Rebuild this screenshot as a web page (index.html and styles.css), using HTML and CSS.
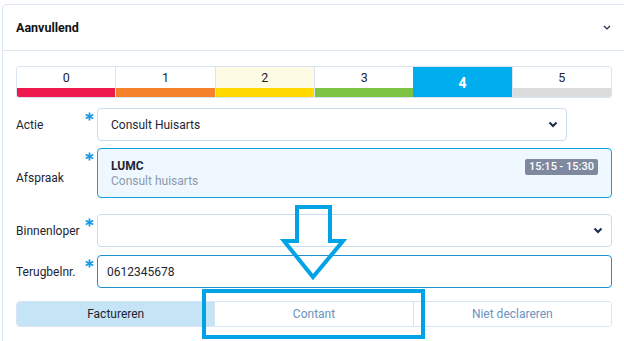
FILE: index.html
```html
<!DOCTYPE html>
<html lang="nl">
<head>
  <meta charset="UTF-8" />
  <meta name="viewport" content="width=device-width,initial-scale=1" />
  <title>Aanvullend</title>
  <link rel="stylesheet" href="styles.css">
</head>
<body>
  <div class="card">
    <div class="card-header">
      <span class="card-title">Aanvullend</span>
      <svg class="collapse" viewBox="0 0 8 5"><path d="M1 1 L4 4 L7 1" fill="none" stroke="#1a2a4a" stroke-width="1.2"/></svg>
    </div>

    <div class="card-body">
      <!-- urgency steps -->
      <div class="steps">
        <div class="step"><span class="num">0</span><span class="bar red"></span></div>
        <div class="step"><span class="num">1</span><span class="bar orange"></span></div>
        <div class="step soft"><span class="num">2</span><span class="bar yellow"></span></div>
        <div class="step"><span class="num">3</span><span class="bar green"></span></div>
        <div class="step active"><span class="num">4</span></div>
        <div class="step"><span class="num">5</span><span class="bar grey"></span></div>
      </div>

      <div class="row">
        <label class="label">Actie</label>
        <span class="req"><svg viewBox="0 0 10 10"><path d="M5 0.5V9.5M0.8 2.7L9.2 7.3M0.8 7.3L9.2 2.7" stroke="#1e9be0" stroke-width="2"/></svg></span>
        <div class="field select short">
          <span>Consult Huisarts</span>
          <svg class="chev" viewBox="0 0 10 7"><path d="M1.5 1.5 L5 5 L8.5 1.5" fill="none" stroke="#1a2a4a" stroke-width="2"/></svg>
        </div>
      </div>

      <div class="row row-appt">
        <label class="label low">Afspraak</label>
        <span class="req"><svg viewBox="0 0 10 10"><path d="M5 0.5V9.5M0.8 2.7L9.2 7.3M0.8 7.3L9.2 2.7" stroke="#1e9be0" stroke-width="2"/></svg></span>
        <div class="appt">
          <div class="appt-text">
            <div class="appt-place">LUMC</div>
            <div class="appt-type">Consult huisarts</div>
          </div>
          <span class="badge">15:15 - 15:30</span>
        </div>
      </div>

      <div class="row row-runner">
        <label class="label">Binnenloper</label>
        <span class="req"><svg viewBox="0 0 10 10"><path d="M5 0.5V9.5M0.8 2.7L9.2 7.3M0.8 7.3L9.2 2.7" stroke="#1e9be0" stroke-width="2"/></svg></span>
        <div class="field select">
          <span></span>
          <svg class="chev" viewBox="0 0 10 7"><path d="M1.5 1.5 L5 5 L8.5 1.5" fill="none" stroke="#1a2a4a" stroke-width="2"/></svg>
        </div>
      </div>

      <div class="row row-phone">
        <label class="label">Terugbelnr.</label>
        <span class="req"><svg viewBox="0 0 10 10"><path d="M5 0.5V9.5M0.8 2.7L9.2 7.3M0.8 7.3L9.2 2.7" stroke="#1e9be0" stroke-width="2"/></svg></span>
        <div class="field focus"><span>0612345678</span></div>
      </div>

      <div class="btn-group">
        <button class="seg selected">Factureren</button>
        <button class="seg">Contant</button>
        <button class="seg">Niet declareren</button>
      </div>
    </div>
  </div>

  <!-- annotation drawn over the form -->
  <svg class="annot" viewBox="0 0 624 341">
    <polygon points="297,207 330,207 330,241 343,241 313,277 284,241 297,241" fill="none" stroke="#00a4e6" stroke-width="4" stroke-linejoin="miter"/>
    <rect x="204" y="291" width="219" height="46" fill="none" stroke="#00a4e6" stroke-width="4"/>
  </svg>
</body>
</html>
```

FILE: styles.css
```css
* {
  margin: 0;
  padding: 0;
  box-sizing: border-box;
}

body {
  width: 624px;
  height: 341px;
  overflow: hidden;
  position: relative;
  background: #fff;
  font-family: Roboto, 'Liberation Sans', sans-serif;
  font-size: 12px;
  color: #1d2533;
}

.card {
  margin: 4px 0 0 2px;
  width: 622px;
  height: 337px;
  overflow: hidden;
  border: 1px solid #dce7f3;
  border-right: none;
  border-bottom: none;
  border-radius: 5px 0 0 0;
}

.card-header {
  height: 46px;
  display: flex;
  align-items: center;
  justify-content: space-between;
  padding: 0 0 0 13px;
  border-bottom: 1px solid #dce7f3;
}

.card-title {
  font-weight: bold;
  font-size: 12.5px;
  color: #111;
}

.collapse {
  width: 8px;
  height: 5px;
  margin-right: 13px;
}

.card-body {
  padding: 15px 0 0 13px;
  width: 609px;
  display: flex;
  flex-direction: column;
}

/* steps */
.steps {
  display: flex;
  height: 32px;
  border: 1px solid #dbe5f2;
  border-radius: 3px;
  overflow: hidden;
}

.step {
  flex: 1;
  display: flex;
  flex-direction: column;
  border-left: 1px solid #dbe5f2;
}

.step:first-child {
  border-left: none;
}

.step .num {
  flex: 1;
  display: flex;
  align-items: center;
  justify-content: center;
  font-size: 12.5px;
  color: #1d2533;
}

.step.soft .num {
  background: #fdfbe3;
}

.step .bar {
  height: 9px;
}

.bar.red { background: #ee1a4d; }
.bar.orange { background: #f5822a; }
.bar.yellow { background: #ffd900; }
.bar.green { background: #7cc243; }
.bar.grey { background: #dcdcdc; }

.step.active {
  background: #00aeef;
  border-left: none;
}

.step.active .num {
  color: #fff;
  font-weight: bold;
  font-size: 14px;
  padding-top: 1px;
}

/* form rows */
.row {
  display: flex;
  margin-top: 10px;
}

.row-appt {
  margin-top: 7px;
}

.row-runner {
  margin-top: 16px;
}

.row-phone {
  margin-top: 8px;
}

.label {
  width: 68px;
  align-self: center;
  font-size: 12px;
  color: #1d2533;
}

.label.low {
  margin-top: 10px;
}

.req {
  width: 13px;
  padding: 4px 0 0 1px;
}

.req svg {
  width: 9px;
  height: 9px;
  display: block;
}

.field {
  flex: 1;
  height: 33px;
  display: flex;
  align-items: center;
  justify-content: space-between;
  padding: 0 8px 0 10px;
  border: 1px solid #cbdaec;
  border-radius: 4px;
  font-size: 12px;
  color: #1d2533;
}

.field.short {
  flex: none;
  width: 470px;
  padding-left: 13px;
}

.field.focus {
  border-color: #1f8fd0;
  padding-left: 9px;
}

.chev {
  width: 10px;
  height: 7px;
}

.appt {
  flex: 1;
  height: 50px;
  display: flex;
  justify-content: space-between;
  align-items: flex-start;
  padding: 10px 13px 0 13px;
  background: #eef8fe;
  border: 1px solid #0ea1e1;
  border-radius: 4px;
}

.appt-text {
  line-height: 15px;
}

.appt-place {
  font-weight: bold;
  color: #1d2533;
}

.appt-type {
  color: #8d99ae;
}

.badge {
  background: #7e889e;
  color: #fff;
  font-size: 11px;
  font-weight: 500;
  padding: 1px 4px;
  line-height: 14px;
  border-radius: 2px;
}

/* segmented buttons */
.btn-group {
  display: flex;
  margin-top: 13px;
  height: 26px;
  border: 1px solid #d5e5f3;
  border-radius: 4px;
  overflow: hidden;
}

.seg {
  flex: 1;
  border: none;
  border-left: 1px solid #d5e5f3;
  background: #fff;
  font-family: Roboto, 'Liberation Sans', sans-serif;
  font-size: 12px;
  color: #6a93c0;
}

.seg:first-child {
  border-left: none;
}

.seg.selected {
  background: #c5e4f5;
  color: #1d2533;
}

.annot {
  position: absolute;
  top: 0;
  left: 0;
  width: 624px;
  height: 341px;
  pointer-events: none;
}
```
